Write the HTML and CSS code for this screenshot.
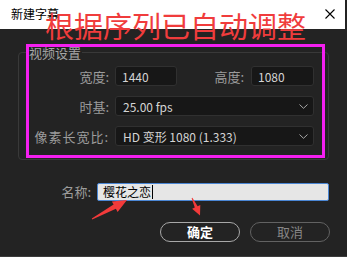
FILE: index.html
```html
<!DOCTYPE html>
<html lang="zh-CN">
<head>
  <meta charset="UTF-8">
  <meta name="viewport" content="width=device-width, initial-scale=1.0">
  <title>新建字幕</title>
  <link rel="stylesheet" href="styles.css">
</head>
<body>
  <div class="dialog">
    <!-- Title bar -->
    <div class="titlebar">
      <span class="title">新建字幕</span>
      <svg class="close" width="10" height="10" viewBox="0 0 10 10">
        <path d="M0.5 0.5 L9.5 9.5 M9.5 0.5 L0.5 9.5" stroke="#000" stroke-width="1.1" fill="none"/>
      </svg>
    </div>

    <!-- Video settings group -->
    <div class="group">
      <div class="legend">视频设置</div>
      <div class="rows">
        <div class="row">
          <span class="label">宽度:</span>
          <div class="field small">1440</div>
          <span class="label grow">高度:</span>
          <div class="field small2">1080</div>
        </div>
        <div class="row">
          <span class="label">时基:</span>
          <div class="field select">
            <span>25.00 fps</span>
            <svg width="9" height="5" viewBox="0 0 9 5"><path d="M0.5 0.5 L4.5 4.3 L8.5 0.5" stroke="#a8a8a8" stroke-width="1" fill="none"/></svg>
          </div>
        </div>
        <div class="row">
          <span class="label wide">像素长宽比:</span>
          <div class="field select">
            <span>HD 变形 1080 (1.333)</span>
            <svg width="9" height="5" viewBox="0 0 9 5"><path d="M0.5 0.5 L4.5 4.3 L8.5 0.5" stroke="#a8a8a8" stroke-width="1" fill="none"/></svg>
          </div>
        </div>
      </div>
    </div>

    <!-- Name -->
    <div class="name-row">
      <span class="label">名称:</span>
      <div class="name-input">樱花之恋<span class="caret"></span></div>
    </div>

    <!-- Buttons -->
    <div class="actions">
      <button class="btn ok">确定</button>
      <button class="btn cancel">取消</button>
    </div>

    <div class="bottom-strip"></div>
  </div>

  <!-- Annotations drawn over the dialog -->
  <div class="note">根据序列已自动调整</div>
  <div class="highlight"></div>
  <svg class="arrows" width="347" height="257" viewBox="0 0 347 257">
    <polygon fill="#f23a3a" points="91.8,218.6 113.6,204.5 111.9,201.4 127,200 117.6,211.9 115.9,208.8 92.2,219.4"/>
    <polygon fill="#f23a3a" points="191.6,198.2 194.8,207.5 192.1,208.8 200,215.5 200.3,205 197.6,206.3 192.4,197.8"/>
  </svg>
</body>
</html>
```

FILE: styles.css
```css
/* Page */
body {
  margin: 0;
  width: 347px;
  height: 257px;
  overflow: hidden;
  background: #232323;
  font-family: "Noto Sans CJK SC", "Microsoft YaHei", sans-serif;
  position: relative;
}

.dialog {
  display: flex;
  flex-direction: column;
}

/* Title bar */
.titlebar {
  height: 29px;
  margin-right: 2px;
  background: #fff;
  display: flex;
  align-items: center;
  justify-content: space-between;
  padding: 0 10px 2px 11px;
  box-sizing: border-box;
}

.title {
  font-size: 12px;
  color: #000;
}

/* Group box */
.group {
  margin: 23px 18px 0;
  border: 1px solid #393939;
  border-radius: 4px;
}

.legend {
  width: fit-content;
  margin: -9px 0 0 9px;
  padding: 0 1px;
  background: #232323;
  color: #a6a6a6;
  font-size: 13px;
  line-height: 17px;
}

.rows {
  display: flex;
  flex-direction: column;
  gap: 10px;
  padding: 5px 14px 13px 0;
}

.row {
  display: flex;
  align-items: center;
  height: 20px;
}

.label {
  width: 90px;
  margin-right: 6px;
  text-align: right;
  color: #9c9c9c;
  font-size: 13px;
  flex-shrink: 0;
}

.label.wide {
  letter-spacing: 1px;
}

.label.grow {
  flex: 1;
  width: auto;
  margin-right: 7px;
}

/* Inputs */
.field {
  height: 20px;
  box-sizing: border-box;
  background: #171717;
  border: 1px solid #303030;
  border-radius: 3px;
  color: #d4d4d4;
  font-size: 12px;
  display: flex;
  align-items: center;
  padding: 0 6px;
}

.field.small {
  width: 62px;
}

.field.small2 {
  width: 63px;
}

.field.select {
  flex: 1;
  justify-content: space-between;
  padding: 0 5px 0 7px;
}

/* Name row */
.name-row {
  display: flex;
  align-items: center;
  margin: 22px 18px 0 0;
}

.name-row .label {
  width: 91px;
}

.name-input {
  flex: 1;
  height: 18px;
  box-sizing: border-box;
  background: #e6e6e6;
  border: 1px solid #4a86d4;
  border-radius: 2px;
  color: #000;
  font-size: 12px;
  display: flex;
  align-items: center;
  padding-left: 5px;
}

.caret {
  width: 1px;
  height: 14px;
  background: #000;
  margin-left: 1px;
}

/* Buttons */
.actions {
  display: flex;
  justify-content: flex-end;
  gap: 10px;
  margin: 21px 17px 0 0;
}

.btn {
  width: 80px;
  height: 20px;
  border-radius: 10px;
  background: #232323;
  font-family: inherit;
  font-size: 13px;
  padding: 0;
  line-height: 16px;
}

.btn.ok {
  border: 1px solid #a8a8a8;
  color: #fff;
  font-weight: bold;
}

.btn.cancel {
  border: 1px solid #626262;
  color: #878787;
}

.bottom-strip {
  height: 2px;
  margin-top: 14px;
  background: #3c3c3c;
}

/* Annotations */
.note {
  position: absolute;
  left: 45px;
  top: 9px;
  font-size: 29px;
  line-height: 32px;
  color: #f03c3c;
  white-space: nowrap;
}

.highlight {
  position: absolute;
  left: 26px;
  top: 44px;
  width: 299px;
  height: 114px;
  box-sizing: border-box;
  border: 3px solid #f51ff0;
}

.arrows {
  position: absolute;
  left: 0;
  top: 0;
}
```
